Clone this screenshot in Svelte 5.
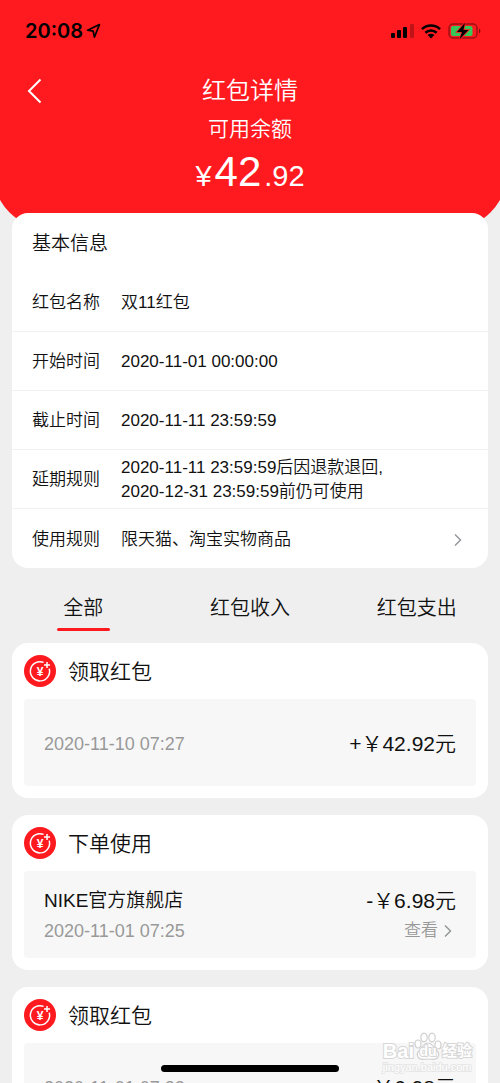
<svelte:options runes />

<script lang="ts">
	type RecordItem = {
		title: string;
		shop?: string;
		time: string;
		amount: string;
		link?: string;
	};

	const info = [
		{ label: '红包名称', lines: ['双11红包'] },
		{ label: '开始时间', lines: ['2020-11-01 00:00:00'] },
		{ label: '截止时间', lines: ['2020-11-11 23:59:59'] },
		{
			label: '延期规则',
			lines: ['2020-11-11 23:59:59后因退款退回,', '2020-12-31 23:59:59前仍可使用']
		},
		{ label: '使用规则', lines: ['限天猫、淘宝实物商品'], link: '#rules' }
	];

	const tabs = ['全部', '红包收入', '红包支出'];
	let active = $state(0);

	const records: RecordItem[] = [
		{ title: '领取红包', time: '2020-11-10 07:27', amount: '+￥42.92元' },
		{
			title: '下单使用',
			shop: 'NIKE官方旗舰店',
			time: '2020-11-01 07:25',
			amount: '-￥6.98元',
			link: '查看'
		},
		{ title: '领取红包', time: '2020-11-01 07:22', amount: '+￥6.98元' }
	];
</script>

{#snippet chevron()}
	<svg class="chevron" viewBox="0 0 8 14" aria-hidden="true">
		<path d="M1 1.5 6.5 7 1 12.5" fill="none" stroke="#8f9496" stroke-width="1.4" />
	</svg>
{/snippet}

<div class="page">
	<header>
		<div class="status">
			<div class="clock">
				<span>20:08</span>
				<svg width="15" height="16" viewBox="0 0 15 16" aria-hidden="true">
					<path
						d="M13.4 1.6 1.6 7.2 7.2 8.2 8.4 14.2Z"
						fill="none"
						stroke="#000"
						stroke-width="1.7"
						stroke-linejoin="round"
					/>
				</svg>
			</div>
			<div class="signals">
				<svg width="23" height="16" viewBox="0 0 23 16" aria-hidden="true">
					<rect x="0" y="10" width="4" height="5" rx="1" />
					<rect x="6" y="7" width="4" height="8" rx="1" />
					<rect x="12" y="4" width="4" height="11" rx="1" />
					<rect x="19" y="1" width="4" height="14" rx="1" opacity="0.25" />
				</svg>
				<svg width="20" height="16" viewBox="0 0 20 16" aria-hidden="true">
					<g fill="none" stroke="#000" stroke-width="2.6">
						<path d="M1 6.2a12.8 12.8 0 0 1 18 0" />
						<path d="M4.4 9.8a8 8 0 0 1 11.2 0" />
					</g>
					<path d="M6.6 12a4.9 4.9 0 0 1 6.8 0L10 15.4Z" />
				</svg>
				<svg width="33" height="18" viewBox="0 0 33 18" aria-hidden="true">
					<rect
						x="1"
						y="2"
						width="28"
						height="14"
						rx="4"
						fill="none"
						stroke="#000"
						stroke-opacity="0.4"
						stroke-width="1.4"
					/>
					<rect x="3" y="4" width="21.5" height="10" rx="2" fill="#35c759" />
					<path d="M31 6.5c1.8.7 1.8 4.3 0 5Z" fill-opacity="0.5" />
					<path
						d="M17 .8 9 10h5l-2.6 7.6 9-9.6h-5Z"
						stroke="#ff1a20"
						stroke-width="1.6"
						paint-order="stroke"
					/>
				</svg>
			</div>
		</div>

		<div class="nav">
			<button class="back" aria-label="返回">
				<svg width="16" height="26" viewBox="0 0 16 26" aria-hidden="true">
					<path d="M13.5 1.5 2 13l11.5 11.5" fill="none" stroke="#fff" stroke-width="2" />
				</svg>
			</button>
			<h1>红包详情</h1>
		</div>

		<p class="balance-label">可用余额</p>
		<p class="balance"><span>¥</span><strong>42</strong><span>.92</span></p>
	</header>

	<section class="card info">
		<h2>基本信息</h2>
		<dl>
			{#each info as row}
				<div class="row">
					<dt>{row.label}</dt>
					<dd>
						{#each row.lines as line}
							<span>{line}</span>
						{/each}
					</dd>
					{#if row.link}
						<a href={row.link} aria-label={row.label}>{@render chevron()}</a>
					{/if}
				</div>
			{/each}
		</dl>
	</section>

	<nav class="tabs">
		{#each tabs as tab, i}
			<button class:active={active === i} onclick={() => (active = i)}>{tab}</button>
		{/each}
	</nav>

	{#each records as record}
		<article class="card record">
			<div class="record-head">
				<svg width="32" height="32" viewBox="0 0 32 32" aria-hidden="true">
					<circle cx="16" cy="16" r="16" fill="#ff1a20" />
					<g fill="none" stroke="#fff" stroke-width="1.5">
						<path d="M19.6 7.4A9.6 9.6 0 1 0 25.2 13.6" />
						<path d="M23 7v6M20 10h6" />
					</g>
					<text class="yen" x="16" y="20.5" text-anchor="middle">¥</text>
				</svg>
				<h3>{record.title}</h3>
			</div>
			<div class="record-body">
				<div class="left">
					{#if record.shop}
						<span class="shop">{record.shop}</span>
					{/if}
					<time>{record.time}</time>
				</div>
				<div class="right">
					<span class="amount">{record.amount}</span>
					{#if record.link}
						<a href="#order">{record.link}{@render chevron()}</a>
					{/if}
				</div>
			</div>
		</article>
	{/each}

	<div class="watermark">
		<div class="logo">
			<span class="bai">Bai</span>
			<span class="paw">
				<svg width="28" height="29" viewBox="0 0 28 29" aria-hidden="true">
					<g fill="#fff" stroke="#cfcfcf" stroke-width="1.2">
						<ellipse cx="4" cy="12" rx="3" ry="4" />
						<ellipse cx="10" cy="5.5" rx="3.2" ry="4.4" />
						<ellipse cx="18" cy="5.5" rx="3.2" ry="4.4" />
						<ellipse cx="24" cy="13" rx="3" ry="4" />
						<path
							d="M14 11c-4 0-5 4-8 7-3 2-3 5-2 7 2 4 6 2 10 2s8 2 10-2c1-2 1-5-2-7-3-3-4-7-8-7Z"
						/>
					</g>
				</svg>
				<span class="du">du</span>
			</span>
			<span class="jy">经验</span>
		</div>
		<span class="url">jingyan.baidu.com</span>
	</div>
	<div class="home-bar"></div>
</div>

<style>
	:global(body) {
		background: #efefef;
	}

	.page {
		height: 100vh;
		overflow: hidden;
		position: relative;
		background: #efefef;
		color: #111;
		font-family: 'Liberation Sans', 'Noto Sans CJK SC', sans-serif;
		font-weight: 350;
		font-size: 17px;
		line-height: 24px;
	}

	h1,
	h2,
	h3,
	p,
	dl,
	dd {
		margin: 0;
		font-weight: inherit;
	}

	button {
		border: 0;
		padding: 0;
		background: none;
		color: inherit;
		font: inherit;
	}

	a {
		color: inherit;
		text-decoration: none;
	}

	svg {
		display: block;
	}

	header {
		position: relative;
		z-index: 0;
		height: 213px;
		color: #fff;
		text-align: center;
	}

	/* red backdrop, wider than the page so only part of its corners shows */
	header::before {
		content: '';
		position: absolute;
		z-index: -1;
		inset: 0 -8px -17px;
		border-radius: 0 0 60px 60px;
		background: #ff1a20;
	}

	.status {
		display: flex;
		justify-content: space-between;
		align-items: center;
		height: 62px;
		padding: 0 19px 0 25px;
		color: #000;
	}

	.clock,
	.signals {
		display: flex;
		align-items: center;
	}

	.clock {
		gap: 3px;
		font: 600 20px/24px Inter, sans-serif;
	}

	.signals {
		gap: 7px;
	}

	.nav {
		display: grid;
		grid-template-columns: 60px 1fr 60px;
		align-items: center;
		height: 56px;
		padding-top: 2px;
		box-sizing: border-box;
	}

	.back {
		padding-left: 27px;
	}

	h1 {
		font-size: 24px;
		line-height: 32px;
	}

	.balance-label {
		font-size: 21px;
		line-height: 22px;
	}

	.balance {
		display: flex;
		justify-content: center;
		align-items: baseline;
		gap: 3px;
		font-size: 29px;
		line-height: 64px;
	}

	.balance strong {
		font-size: 42px;
		font-weight: inherit;
	}

	.card {
		position: relative;
		margin: 0 12px;
		border-radius: 16px;
		background: #fff;
	}

	.info h2 {
		padding: 2px 20px 0;
		font-size: 19px;
		line-height: 58px;
	}

	.row {
		box-sizing: border-box;
		display: flex;
		align-items: center;
		gap: 20px;
		height: 59px;
		padding: 2px 26px 0 20px;
		border-bottom: 1px solid #f1f1f1;
	}

	.row:last-child {
		border-bottom: 0;
	}

	.row dt {
		width: 69px;
	}

	.row dd {
		display: flex;
		flex: 1;
		flex-direction: column;
	}

	.chevron {
		width: 8px;
		height: 14px;
	}

	.tabs {
		display: grid;
		grid-template-columns: repeat(3, 1fr);
		height: 75px;
	}

	.tabs button {
		display: flex;
		flex-direction: column;
		align-items: center;
		padding-top: 25px;
		font-size: 20px;
		line-height: 30px;
	}

	.tabs button::after {
		content: '';
		width: 53px;
		height: 3px;
		margin-top: 5px;
		border-radius: 2px;
	}

	.tabs button.active::after {
		background: #ff1a20;
	}

	.record {
		margin-bottom: 17px;
		padding: 12px;
	}

	.record-head {
		display: flex;
		align-items: center;
		gap: 12px;
		height: 32px;
		margin-bottom: 12px;
	}

	.record-head h3 {
		padding-top: 2px;
		font-size: 21px;
		line-height: 30px;
	}

	.yen {
		fill: #fff;
		font-size: 12px;
		font-weight: 700;
	}

	.record-body {
		box-sizing: border-box;
		display: flex;
		justify-content: space-between;
		align-items: center;
		height: 87px;
		padding: 2px 20px 0;
		border-radius: 4px;
		background: #f7f7f7;
	}

	.left,
	.right {
		display: flex;
		flex-direction: column;
		font-size: 18px;
		line-height: 30px;
	}

	.right {
		align-items: flex-end;
	}

	.shop {
		font-size: 19px;
	}

	time,
	.right a {
		color: #999;
	}

	.amount {
		font-size: 21px;
	}

	.right a {
		display: flex;
		align-items: center;
		gap: 6px;
		padding-right: 4px;
		font-size: 17px;
	}

	.watermark {
		position: absolute;
		right: 28px;
		bottom: 10px;
		color: #fff;
		font-weight: 700;
		-webkit-text-stroke: 2px #d6d6d6;
		paint-order: stroke fill;
	}

	/* the svg keeps its own paint order */
	.watermark svg {
		paint-order: normal;
	}

	.logo {
		display: flex;
		align-items: flex-end;
		height: 32px;
		line-height: 20px;
	}

	.bai {
		font-size: 20px;
	}

	.paw {
		position: relative;
	}

	.du {
		position: absolute;
		inset: auto 0 0;
		font-size: 14px;
		text-align: center;
	}

	.jy {
		font-size: 15px;
	}

	.url {
		display: block;
		font-size: 11px;
		font-weight: 400;
		line-height: 12px;
		-webkit-text-stroke: 2px #e6e6e6;
	}

	.home-bar {
		position: absolute;
		bottom: 11px;
		left: 50%;
		width: 178px;
		height: 7px;
		margin-left: -89px;
		border-radius: 4px;
		background: #000;
	}
</style>
